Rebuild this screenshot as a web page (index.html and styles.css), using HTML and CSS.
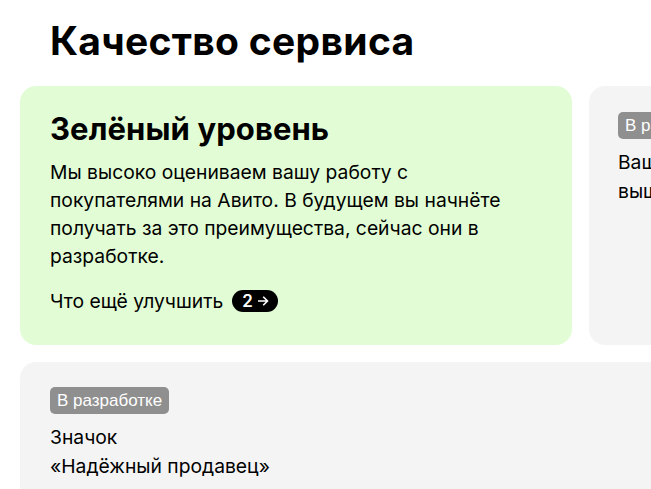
FILE: index.html
```html
<!DOCTYPE html>
<html lang="ru">
<head>
<meta charset="utf-8">
<link rel="stylesheet" href="styles.css">
</head>
<body>
<main class="page">
  <h1 class="title">Качество сервиса</h1>
  <div class="row">
    <section class="card card-green">
      <h2 class="card-title">Зелёный уровень</h2>
      <p class="text">Мы высоко оцениваем вашу работу с покупателями на Авито. В будущем вы начнёте получать за это преимущества, сейчас они в разработке.</p>
      <div class="improve">
        <span>Что ещё улучшить</span>
        <span class="pill">2<svg class="arrow" width="12" height="12" viewBox="0 0 12 12"><path d="M1 6h9.5M6.2 1.7 10.5 6l-4.3 4.3" fill="none" stroke="#fff" stroke-width="1.6"/></svg></span>
      </div>
    </section>
    <section class="card card-grey card-side">
      <span class="badge">В разработке</span>
      <p class="text text-small">Ваш рейтинг<br>выше среднего</p>
    </section>
  </div>
  <section class="card card-grey card-bottom">
    <span class="badge">В разработке</span>
    <p class="text text-small">Значок<br>«Надёжный продавец»</p>
  </section>
</main>
</body>
</html>
```
FILE: styles.css
```css
* { box-sizing: border-box; }
html, body { margin: 0; padding: 0; background: #fff; overflow: hidden; }
body { font-family: Inter, "Noto Sans", sans-serif; color: #000; width: 651px; height: 489px; }
.page { padding: 16px 0 0 20px; width: 1200px; }
.title { margin: 0 0 20px 30px; font-size: 39px; font-weight: 700; line-height: 50px; letter-spacing: 0.3px; }
.row { display: flex; gap: 17px; }
.card { border-radius: 16px; padding: 24px 30px; }
.card-green { background: #e2fdd5; width: 552px; height: 259px; }
.card-grey { background: #f4f4f4; }
.card-side { width: 400px; height: 259px; padding: 26px 29px; }
.card-bottom { margin-top: 17px; width: 1000px; height: 200px; padding: 25px 30px; }
.card-title { margin: 0 0 10px; font-size: 31px; font-weight: 700; line-height: 38px; letter-spacing: 0.1px; }
.text { margin: 0; font-size: 19.3px; line-height: 28px; max-width: 466px; }
.text-small { margin-top: 9px; line-height: 29px; }
.improve { margin-top: 17px; display: flex; align-items: center; gap: 9px; font-size: 19.3px; line-height: 28px; }
.pill { display: inline-flex; align-items: center; gap: 4px; background: #000; color: #fff; border-radius: 11px; height: 22px; padding: 0 9px 0 10px; font-size: 17px; font-weight: 600; }
.arrow { display: block; }
.badge { display: inline-block; background: #8f8f8f; color: #fff; border-radius: 5px; height: 27px; line-height: 27px; padding: 0 7px; font-family: "Liberation Sans", Arial, sans-serif; font-size: 17px; }
```
